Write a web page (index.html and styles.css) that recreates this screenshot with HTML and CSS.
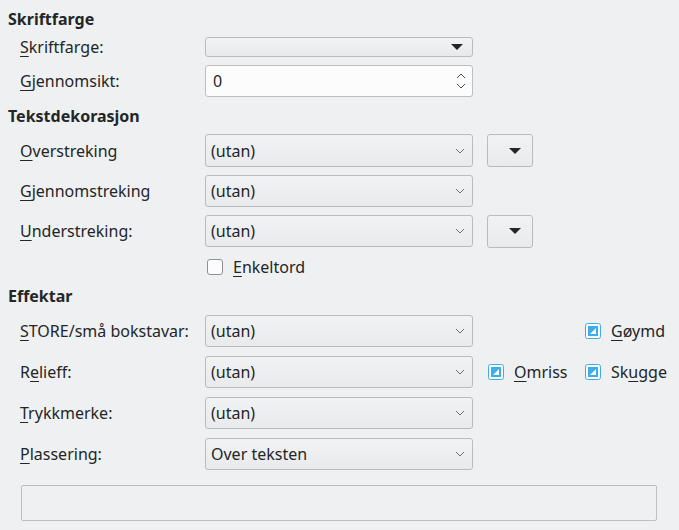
FILE: index.html
```html
<!DOCTYPE html>
<html lang="nn">
<head>
    <meta charset="UTF-8">
    <title>Skrifteffektar</title>
    <link rel="stylesheet" href="styles.css">
</head>
<body>
    <div class="dialog">
        <div class="section-title">Skriftfarge</div>
        <div class="grid first">
            <label class="label"><u>S</u>kriftfarge:</label>
            <div class="color-button">
                <svg width="14" height="8" viewBox="0 0 14 8"><path d="M1 1h12L7 7z" fill="#232627"/></svg>
            </div>
            <div></div>

            <label class="label"><u>G</u>jennomsikt:</label>
            <div class="spinbox">
                <span>0</span>
                <svg width="12" height="22" viewBox="0 0 12 22"><path d="M2 8l4-4 4 4M2 14l4 4 4-4" fill="none" stroke="#4d4f50" stroke-width="1"/></svg>
            </div>
            <div></div>
        </div>

        <div class="section-title">Tekstdekorasjon</div>
        <div class="grid second">
            <label class="label tall"><u>O</u>verstreking</label>
            <div class="combo"><span>(utan)</span><svg class="chev" width="10" height="6" viewBox="0 0 10 6"><path d="M1 1l4 4 4-4" fill="none" stroke="#6e7072"/></svg></div>
            <div class="extra"><div class="small-button"><svg width="14" height="8" viewBox="0 0 14 8"><path d="M1 1h12L7 7z" fill="#232627"/></svg></div></div>

            <label class="label tall"><u>G</u>jennomstreking</label>
            <div class="combo"><span>(utan)</span><svg class="chev" width="10" height="6" viewBox="0 0 10 6"><path d="M1 1l4 4 4-4" fill="none" stroke="#6e7072"/></svg></div>
            <div></div>

            <label class="label tall"><u>U</u>nderstreking:</label>
            <div class="combo"><span>(utan)</span><svg class="chev" width="10" height="6" viewBox="0 0 10 6"><path d="M1 1l4 4 4-4" fill="none" stroke="#6e7072"/></svg></div>
            <div class="extra"><div class="small-button"><svg width="14" height="8" viewBox="0 0 14 8"><path d="M1 1h12L7 7z" fill="#232627"/></svg></div></div>

            <div></div>
            <div class="check">
                <span class="box"></span>
                <span><u>E</u>nkeltord</span>
            </div>
            <div></div>
        </div>

        <div class="section-title">Effektar</div>
        <div class="grid third">
            <label class="label tall"><u>S</u>TORE/små bokstavar:</label>
            <div class="combo"><span>(utan)</span><svg class="chev" width="10" height="6" viewBox="0 0 10 6"><path d="M1 1l4 4 4-4" fill="none" stroke="#6e7072"/></svg></div>
            <div class="checks">
                <div></div>
                <div class="check on">
                    <svg class="box-on" width="16" height="16" viewBox="0 0 16 16"><rect x="0.5" y="0.5" width="15" height="15" rx="2" fill="#fcfcfc" stroke="#3daee9"/><rect x="3" y="3" width="10" height="10" fill="#3daee9"/><path d="M5 11h6V5z" fill="#fcfcfc"/></svg>
                    <span><u>G</u>øymd</span>
                </div>
            </div>

            <label class="label tall">R<u>e</u>lieff:</label>
            <div class="combo"><span>(utan)</span><svg class="chev" width="10" height="6" viewBox="0 0 10 6"><path d="M1 1l4 4 4-4" fill="none" stroke="#6e7072"/></svg></div>
            <div class="checks">
                <div class="check on">
                    <svg class="box-on" width="16" height="16" viewBox="0 0 16 16"><rect x="0.5" y="0.5" width="15" height="15" rx="2" fill="#fcfcfc" stroke="#3daee9"/><rect x="3" y="3" width="10" height="10" fill="#3daee9"/><path d="M5 11h6V5z" fill="#fcfcfc"/></svg>
                    <span><u>O</u>mriss</span>
                </div>
                <div class="check on">
                    <svg class="box-on" width="16" height="16" viewBox="0 0 16 16"><rect x="0.5" y="0.5" width="15" height="15" rx="2" fill="#fcfcfc" stroke="#3daee9"/><rect x="3" y="3" width="10" height="10" fill="#3daee9"/><path d="M5 11h6V5z" fill="#fcfcfc"/></svg>
                    <span>Sk<u>u</u>gge</span>
                </div>
            </div>

            <label class="label tall"><u>T</u>rykkmerke:</label>
            <div class="combo"><span>(utan)</span><svg class="chev" width="10" height="6" viewBox="0 0 10 6"><path d="M1 1l4 4 4-4" fill="none" stroke="#6e7072"/></svg></div>
            <div></div>

            <label class="label tall"><u>P</u>lassering:</label>
            <div class="combo"><span>Over teksten</span><svg class="chev" width="10" height="6" viewBox="0 0 10 6"><path d="M1 1l4 4 4-4" fill="none" stroke="#6e7072"/></svg></div>
            <div></div>
        </div>

        <div class="preview"></div>
    </div>
</body>
</html>
```

FILE: styles.css
```css
body {
    margin: 0;
    background-color: #eff0f1;
    font-family: "Noto Sans", sans-serif;
    font-size: 16px;
    color: #232627;
}
.dialog {
    padding: 8px 0 0 0;
}
.section-title {
    font-weight: bold;
    height: 22px;
    line-height: 22px;
    margin-left: 8px;
}
.grid {
    display: grid;
    grid-template-columns: 185px 268px auto;
    padding-left: 20px;
    align-items: center;
}
.grid.first {
    margin-top: 7px;
    margin-bottom: 8px;
    grid-template-rows: 20px 32px;
    row-gap: 8px;
}
.grid.second {
    margin-top: 7px;
    grid-template-rows: 33px 32px 32px 16px;
    row-gap: 8px;
}
.grid.second .check {
    margin-top: 8px;
}
.grid.second + .section-title {
    margin-top: 14px;
}
.grid.third {
    margin-top: 8px;
    grid-template-rows: 32px 32px 32px 32px;
    row-gap: 9px;
}
u {
    text-decoration-thickness: 1px;
    text-underline-offset: 3px;
}
.label {
    white-space: nowrap;
}
.color-button {
    height: 20px;
    box-sizing: border-box;
    border: 1px solid #b9bbbc;
    border-radius: 3px;
    background: linear-gradient(#f2f3f4, #e8e9ea);
    display: flex;
    align-items: center;
    justify-content: flex-end;
    padding-right: 8px;
}
.spinbox {
    height: 32px;
    box-sizing: border-box;
    border: 1px solid #bcbebf;
    border-radius: 3px;
    background-color: #fcfcfc;
    display: flex;
    align-items: center;
    justify-content: space-between;
    padding: 0 5px 0 7px;
}
.combo {
    height: 100%;
    box-sizing: border-box;
    border: 1px solid #b9bbbc;
    border-radius: 3px;
    background: linear-gradient(#f1f2f3, #e9eaeb);
    display: flex;
    align-items: center;
    justify-content: space-between;
    padding: 0 6px 0 5px;
}
.chev {
    margin-right: 1px;
}
.extra {
    padding-left: 14px;
}
.small-button {
    width: 46px;
    height: 33px;
    box-sizing: border-box;
    border: 1px solid #b9bbbc;
    border-radius: 3px;
    background: linear-gradient(#f1f2f3, #e9eaeb);
    display: flex;
    align-items: center;
    justify-content: flex-end;
    padding-right: 10px;
}
.check {
    display: flex;
    align-items: center;
    gap: 10px;
    padding-left: 2px;
    height: 16px;
}
.check .box {
    width: 16px;
    height: 16px;
    box-sizing: border-box;
    border: 1px solid #8f9192;
    border-radius: 3px;
    background-color: #fcfcfc;
}
.checks {
    display: grid;
    grid-template-columns: 97px auto;
    padding-left: 15px;
}
.check.on {
    padding-left: 0;
}
.preview {
    margin: 15px 22px 0 21px;
    height: 36px;
    box-sizing: border-box;
    border: 1px solid #bcbebf;
    border-radius: 2px;
}
```
